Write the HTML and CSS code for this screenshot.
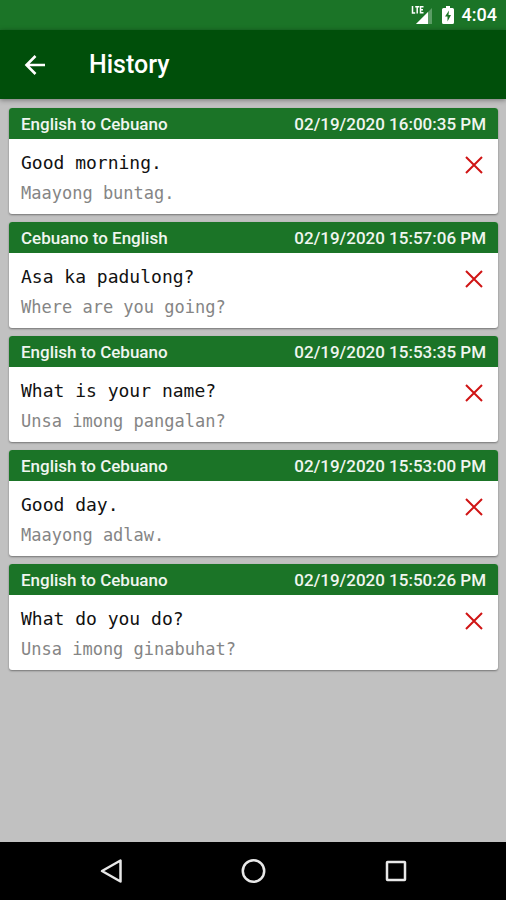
FILE: index.html
```html
<!DOCTYPE html>
<html lang="en">
<head>
<meta charset="utf-8">
<meta name="viewport" content="width=device-width, initial-scale=1">
<title>History</title>
<link rel="stylesheet" href="styles.css">
</head>
<body>
<div class="status-bar">
  <svg class="signal" width="22" height="20" viewBox="0 0 22 20" aria-hidden="true">
    <path d="M21 3v16H5z" fill="#5b9d65"/>
    <path d="M17 7v12H5z" fill="#fff"/>
    <path d="M1.500 1v7h2.700M4.200 1.800h4M6.200 1.800V8.500M12.500 1.800h-3v6h3M9.500 4.700h2.500" fill="none" stroke="#fff" stroke-width="1.500"/>
  </svg>
  <svg class="battery" width="12" height="18" viewBox="0 0 12 18" aria-hidden="true">
    <path d="M4 0h4v2h2.500Q12 2 12 3.500v13Q12 18 10.500 18h-9Q0 18 0 16.500v-13Q0 2 1.500 2H4z" fill="#fff"/>
    <path d="M7 4.500 3 10.500h2.500V15.500L9 9H6.500z" fill="#1b7426"/>
  </svg>
  <span class="clock">4:04</span>
</div>
<header class="app-bar">
  <button class="back" type="button" aria-label="Back">
    <svg width="22" height="20" viewBox="0 0 22 20" aria-hidden="true"><path d="M21 10H2M11.500 1 2.500 10l9 9" fill="none" stroke="#fff" stroke-width="2.600"/></svg>
  </button>
  <h1>History</h1>
</header>
<main>
  <ul class="history">
    <li class="card">
      <div class="card-head"><span>English to Cebuano</span><time>02/19/2020 16:00:35 PM</time></div>
      <div class="card-body">
        <div><p class="source">Good morning.</p><p class="result">Maayong buntag.</p></div>
        <button class="remove" type="button" aria-label="Delete"><svg width="18" height="18" viewBox="0 0 18 18" aria-hidden="true"><path d="M1 1l16 16M17 1 1 17"/></svg></button>
      </div>
    </li>
    <li class="card">
      <div class="card-head"><span>Cebuano to English</span><time>02/19/2020 15:57:06 PM</time></div>
      <div class="card-body">
        <div><p class="source">Asa ka padulong?</p><p class="result">Where are you going?</p></div>
        <button class="remove" type="button" aria-label="Delete"><svg width="18" height="18" viewBox="0 0 18 18" aria-hidden="true"><path d="M1 1l16 16M17 1 1 17"/></svg></button>
      </div>
    </li>
    <li class="card">
      <div class="card-head"><span>English to Cebuano</span><time>02/19/2020 15:53:35 PM</time></div>
      <div class="card-body">
        <div><p class="source">What is your name?</p><p class="result">Unsa imong pangalan?</p></div>
        <button class="remove" type="button" aria-label="Delete"><svg width="18" height="18" viewBox="0 0 18 18" aria-hidden="true"><path d="M1 1l16 16M17 1 1 17"/></svg></button>
      </div>
    </li>
    <li class="card">
      <div class="card-head"><span>English to Cebuano</span><time>02/19/2020 15:53:00 PM</time></div>
      <div class="card-body">
        <div><p class="source">Good day.</p><p class="result">Maayong adlaw.</p></div>
        <button class="remove" type="button" aria-label="Delete"><svg width="18" height="18" viewBox="0 0 18 18" aria-hidden="true"><path d="M1 1l16 16M17 1 1 17"/></svg></button>
      </div>
    </li>
    <li class="card">
      <div class="card-head"><span>English to Cebuano</span><time>02/19/2020 15:50:26 PM</time></div>
      <div class="card-body">
        <div><p class="source">What do you do?</p><p class="result">Unsa imong ginabuhat?</p></div>
        <button class="remove" type="button" aria-label="Delete"><svg width="18" height="18" viewBox="0 0 18 18" aria-hidden="true"><path d="M1 1l16 16M17 1 1 17"/></svg></button>
      </div>
    </li>
  </ul>
</main>
<nav class="system-nav" aria-label="System">
  <button type="button" aria-label="Back"><svg width="24" height="26" viewBox="0 0 24 26" aria-hidden="true"><path d="M21.500 2.500v21L3 13z"/></svg></button>
  <button type="button" aria-label="Home"><svg width="26" height="26" viewBox="0 0 26 26" aria-hidden="true"><circle cx="13.500" cy="13" r="10.700"/></svg></button>
  <button type="button" aria-label="Recent apps"><svg width="24" height="26" viewBox="0 0 24 26" aria-hidden="true"><rect x="4" y="4" width="18" height="18" rx="0.500"/></svg></button>
</nav>
</body>
</html>
```
FILE: styles.css
```css
* {
  box-sizing: border-box;
}

body {
  display: flex;
  flex-direction: column;
  min-height: 100vh;
  margin: 0;
  background: #c1c1c1;
  font-family: Roboto, "Liberation Sans", sans-serif;
}

button {
  display: flex;
  align-items: center;
  justify-content: center;
  padding: 0;
  border: 0;
  background: none;
  cursor: pointer;
}

h1,
p {
  margin: 0;
}

.status-bar {
  display: flex;
  align-items: center;
  justify-content: flex-end;
  height: 30px;
  padding-right: 9px;
  background: #1b7427;
  color: #fff;
}

.battery {
  margin: 0 8px 0 9px;
}

.clock {
  font-size: 18px;
  font-weight: 500;
  line-height: 30px;
}

.app-bar {
  display: flex;
  align-items: center;
  height: 69px;
  padding: 0 24px;
  background: #004f0a;
  color: #fff;
  box-shadow: 0 1px 5px rgba(0, 0, 0, 0.4);
}

.back {
  margin-right: 43px;
}

.app-bar h1 {
  font-size: 25px;
  font-weight: 500;
  line-height: 32px;
}

main {
  flex: 1;
  padding: 9px 8px 9px 9px;
}

.history {
  display: flex;
  flex-direction: column;
  gap: 8px;
  margin: 0;
  padding: 0;
  list-style: none;
}

.card {
  overflow: hidden;
  border-radius: 3px;
  background: #fff;
  box-shadow: 0 1px 2px rgba(0, 0, 0, 0.4);
}

.card-head {
  display: flex;
  justify-content: space-between;
  padding: 1px 12px 0;
  background: #1b7427;
  color: #f0f6f0;
  font-size: 17px;
  font-weight: 500;
  line-height: 30px;
}

.card-body {
  display: flex;
  align-items: flex-start;
  justify-content: space-between;
  padding: 9px 12px 6px;
}

.source,
.result {
  font-family: "DejaVu Sans Mono", "Liberation Mono", monospace;
  line-height: 30px;
}

.source {
  color: #111;
  font-size: 18px;
}

.result {
  color: #858585;
  font-size: 17px;
}

.remove {
  width: 24px;
  height: 34px;
}

.remove path {
  fill: none;
  stroke: #d01414;
  stroke-width: 2;
}

.system-nav {
  display: flex;
  justify-content: center;
  gap: 94px;
  height: 58px;
  background: #000;
}

.system-nav button {
  width: 48px;
}

.system-nav svg {
  fill: none;
  stroke: #e8e8e8;
  stroke-width: 2.500;
  stroke-linejoin: round;
}
```
